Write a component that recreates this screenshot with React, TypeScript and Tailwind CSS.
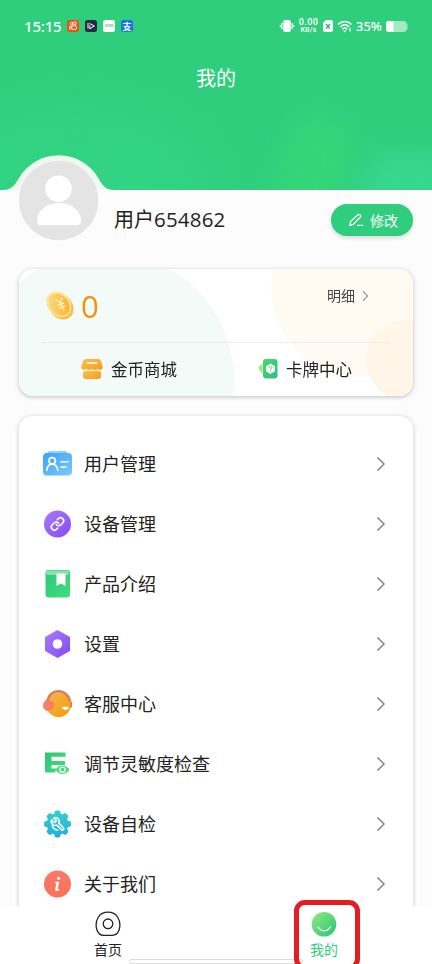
import React from 'react';

const Chevron: React.FC<{ className?: string }> = ({ className }) => (
  <svg viewBox="0 0 10 16" fill="none" className={className}>
    <path d="M1.5 1.5 8 8l-6.5 6.5" stroke="#858585" strokeWidth="1.5" />
  </svg>
);

// Menu icons, all drawn on a 30x30 grid
const UserCardIcon = () => (
  <svg viewBox="0 0 30 30" className="size-[30px]" fill="none">
    <defs>
      <linearGradient id="card" x1="0" y1="0" x2="1" y2="1">
        <stop stopColor="#3ba2f8" />
        <stop offset="1" stopColor="#7cc9fb" />
      </linearGradient>
    </defs>
    <rect x="4.500" y="2" width="20" height="8" rx="2" fill="#90d0fb" />
    <rect x="0" y="4" width="29" height="22.500" rx="4" fill="url(#card)" />
    <g stroke="#fff" strokeWidth="1.700" strokeLinecap="round">
      <circle cx="9.200" cy="11.800" r="3.200" />
      <path d="M3.700 21.300c.5-3.900 2.500-6.100 5.500-6.100s5 2.200 5.500 6.100" />
      <path d="M18 12.800h7M18 18h5" strokeWidth="1.500" />
    </g>
  </svg>
);

const LinkIcon = () => (
  <svg viewBox="0 0 30 30" className="size-[30px]" fill="none">
    <defs>
      <linearGradient id="violet" x1="0" y1="0" x2="1" y2="1">
        <stop stopColor="#a77cf8" />
        <stop offset="1" stopColor="#8649f5" />
      </linearGradient>
    </defs>
    <circle cx="14.500" cy="15" r="13.500" fill="url(#violet)" />
    <g transform="translate(7 7.500) scale(.62)" stroke="#fff" strokeWidth="2.600" strokeLinecap="round">
      <path d="M10 13a5 5 0 0 0 7.54.54l3-3a5 5 0 0 0-7.07-7.07l-1.72 1.71" />
      <path d="M14 11a5 5 0 0 0-7.54-.54l-3 3a5 5 0 0 0 7.07 7.07l1.71-1.71" />
    </g>
  </svg>
);

const BookIcon = () => (
  <svg viewBox="0 0 30 30" className="size-[30px]">
    <defs>
      <linearGradient id="book" x1="0" y1="0" x2="1" y2="1">
        <stop stopColor="#2fc57c" />
        <stop offset="1" stopColor="#3ee07b" />
      </linearGradient>
    </defs>
    <path d="M2.500 4a3 3 0 0 1 2-3H26l1 2v22.500a3 3 0 0 1-3 3H6A3.500 3.500 0 0 1 2.500 25z" fill="url(#book)" />
    <path d="M4 1.500h22L25.500 6H4c-1.300-1-1.300-3.500 0-4.500z" fill="#83e3ad" />
    <path d="M13.500 4.500h9V17L18 14.400 13.500 17z" fill="#fff" />
  </svg>
);

const HexIcon = () => (
  <svg viewBox="0 0 30 30" className="size-[30px]">
    <path
      d="M14.500 2 26 8.500v13L14.500 28 3 21.500v-13z"
      fill="url(#violet)"
      stroke="url(#violet)"
      strokeWidth="2"
      strokeLinejoin="round"
    />
    <circle cx="14.500" cy="15" r="4.800" fill="#fff" />
  </svg>
);

const ServiceIcon = () => (
  <svg viewBox="0 0 30 30" className="size-[30px]" fill="none">
    <defs>
      <linearGradient id="face" x1="0" y1="0" x2="1" y2="1">
        <stop stopColor="#f6b84a" />
        <stop offset="1" stopColor="#f39a10" />
      </linearGradient>
    </defs>
    <rect x="24.500" y="12" width="4.500" height="7" rx="2" fill="#dc7047" />
    <circle cx="15.500" cy="15.700" r="12.300" fill="url(#face)" />
    <path d="M4 12.500C6 5 10.500 2.200 15.500 2.200S25 5 27.200 12" stroke="#de7a51" strokeWidth="2.400" />
    <circle cx="5.500" cy="16.500" r="5.500" fill="#f97e62" />
    <path d="M18.800 17.800h7c0 4.200-6.500 4.200-7 0z" fill="#fff" />
  </svg>
);

const SensitivityIcon = () => (
  <svg viewBox="0 0 30 30" className="size-[30px]" fill="none">
    <defs>
      <linearGradient id="bars" x1="0" y1="0" x2="1" y2="1">
        <stop stopColor="#2ec47b" />
        <stop offset="1" stopColor="#45df78" />
      </linearGradient>
    </defs>
    <path d="M2 3.500h20.500v4.200h-14V12H22v4H8.500v3.500h5L12 23.500H2z" fill="url(#bars)" />
    <path d="M12.500 20.700c4-5.600 10-5.600 14 0-4 5.600-10 5.600-14 0z" fill="#44d97a" />
    <circle cx="19.500" cy="20.700" r="2.600" stroke="#fff" strokeWidth="1.400" />
  </svg>
);

const GearIcon = () => (
  <svg viewBox="0 0 30 30" className="size-[30px]" fill="none">
    <defs>
      <linearGradient id="cyan" x1="0" y1="0" x2="0" y2="30" gradientUnits="userSpaceOnUse">
        <stop stopColor="#38d2cc" />
        <stop offset="1" stopColor="#20acdf" />
      </linearGradient>
      <clipPath id="gear">
        <circle cx="14.500" cy="15" r="10.900" />
        {[0, 45, 90, 135].map((angle) => (
          <rect key={angle} x="11.500" y="1.500" width="6" height="27" rx="2" transform={`rotate(${angle} 14.500 15)`} />
        ))}
      </clipPath>
    </defs>
    <rect width="30" height="30" fill="url(#cyan)" clipPath="url(#gear)" />
    {/* wrench, mirrored so that the jaw opens to the top left */}
    <path
      transform="translate(22.800 7.200) scale(-.66 .66)"
      stroke="#fff"
      strokeWidth="2.300"
      strokeLinejoin="round"
      d="M14.7 6.3a1 1 0 0 0 0 1.4l1.6 1.6a1 1 0 0 0 1.4 0l3.77-3.77a6 6 0 0 1-7.94 7.94l-6.91 6.91a2.12 2.12 0 0 1-3-3l6.91-6.91a6 6 0 0 1 7.94-7.94l-3.76 3.76z"
    />
    <path d="M9.300 16.500a6 6 0 0 0 5.500 4.600" stroke="#fff" strokeWidth="1.400" strokeLinecap="round" />
  </svg>
);

const InfoIcon = () => (
  <svg viewBox="0 0 30 30" className="size-[30px]">
    <defs>
      <linearGradient id="coral" x1="0" y1="0" x2="0" y2="1">
        <stop stopColor="#fb7868" />
        <stop offset="1" stopColor="#fa7157" />
      </linearGradient>
    </defs>
    <circle cx="14.500" cy="15" r="13.500" fill="url(#coral)" />
    <circle cx="15.600" cy="9.300" r="1.600" fill="#fff" />
    <path d="M12.300 12.800h4l-1.700 7.200 1.700-.3-.3 1.600c-2 1.200-4.200 1-4-.8l1.400-6-1.300-.3z" fill="#fff" />
  </svg>
);

const menu = [
  { label: '用户管理', icon: <UserCardIcon /> },
  { label: '设备管理', icon: <LinkIcon /> },
  { label: '产品介绍', icon: <BookIcon /> },
  { label: '设置', icon: <HexIcon /> },
  { label: '客服中心', icon: <ServiceIcon /> },
  { label: '调节灵敏度检查', icon: <SensitivityIcon /> },
  { label: '设备自检', icon: <GearIcon /> },
  { label: '关于我们', icon: <InfoIcon /> },
];

const StatusBar = () => (
  <div className="flex h-[52px] items-center pl-6 pr-[24px] text-white">
    <span className="w-[38px] font-['Noto_Sans'] text-[15px] font-medium leading-none tracking-[-0.2px]">15:15</span>
    <div className="ml-[5px] flex gap-1.5">
      <span className="flex size-3 items-center justify-center rounded-[2.5px] bg-[#e65314]">
        <svg viewBox="0 0 12 12" className="size-3" fill="none" stroke="#fff" strokeWidth=".9">
          <circle cx="4.600" cy="3.600" r="1.300" />
          <circle cx="7.800" cy="3.400" r="1.500" />
          <rect x="4.800" y="5.800" width="4.600" height="3.600" rx="1" />
          <path d="M4.800 7 2.700 6v3.400l2.100-1" />
        </svg>
      </span>
      <span className="flex size-3 items-center justify-center rounded-[2.5px] bg-[#272c47]">
        <svg viewBox="0 0 12 12" className="size-3" fill="none" stroke="#fff" strokeWidth="1">
          <path d="M4.500 3.500 9.300 6 4.800 8.800V5.500M3 3v5.500" />
        </svg>
      </span>
      <span className="flex size-3 items-center justify-center rounded-[2.5px] bg-white font-['Inter'] text-[4px] font-bold leading-none text-[#6fbf98]">
        vivo
      </span>
      <span className="flex size-3 items-center justify-center rounded-[2.5px] bg-[#1673ee] text-[9px] font-bold leading-none">
        支
      </span>
    </div>
    <div className="ml-auto flex items-center">
      <svg viewBox="0 0 16 14" className="h-3.5 w-4" fill="#fff">
        <rect x="4.300" y="1" width="7.400" height="12" rx="1.800" />
        <path d="M2.200 4h1.300v6H2.200zM12.500 4h1.300v6h-1.300zM.7 6h1v2h-1zM14.300 6h1v2h-1z" />
      </svg>
      <div className="ml-[3px] flex w-[21px] flex-col items-center font-['Roboto'] font-medium">
        <span className="text-[9px] leading-[9px] tracking-[0.4px]">0.00</span>
        <span className="text-[7px] leading-[7px] tracking-[0.2px]">KB/s</span>
      </div>
      <svg viewBox="0 0 10 12" className="ml-[4px] h-3 w-2.5">
        <path d="M3 0h5a2 2 0 0 1 2 2v8a2 2 0 0 1-2 2H2a2 2 0 0 1-2-2V3z" fill="#fff" />
        <path d="m3 4 4 4.500M7 4 3 8.500" stroke="#2fae6d" strokeWidth="1.300" />
      </svg>
      <svg viewBox="0 0 16 13" className="ml-[4px] h-[13px] w-4" fill="none" stroke="#fff" strokeWidth="1.500">
        <path d="M1 4.500c4-4 9.500-4 13.500 0M3.300 7c2.700-2.700 6.200-2.700 9 0M5.300 9.200c1.500-1.500 3.500-1.500 5 0" />
        <path d="m6 10.500 1.800 2 1.700-2z" fill="#fff" stroke="none" />
        <path d="M13 8v3.500" strokeWidth="1.200" />
      </svg>
      <span className="ml-[3px] w-[27px] font-['Noto_Sans'] text-[13px] font-medium leading-none">35%</span>
      <svg viewBox="0 0 22 11" className="ml-[3px] h-[11px] w-[22px]">
        <path d="M3 0h15.500c1.500 0 2 2.500 3 3v5c-1 .5-1.500 3-3 3H3a3 3 0 0 1-3-3V3a3 3 0 0 1 3-3z" fill="#a4e9c4" />
        <path d="M3 0h4.500v11H3a3 3 0 0 1-3-3V3a3 3 0 0 1 3-3z" fill="#fff" />
      </svg>
    </div>
  </div>
);

const Header = () => (
  <header className="relative h-[190px] shrink-0 overflow-hidden bg-[#2fce7d]">
    {/* soft glow at the bottom of the banner */}
    <div className="absolute -left-16 top-[115px] h-[190px] w-[280px] rounded-full bg-[#35d98c]/50 blur-2xl" />
    <div className="absolute left-[278px] top-[118px] h-[110px] w-[68px] rotate-[20deg] rounded-full bg-[#37d876]/65 blur-md" />
    <div className="absolute left-[360px] top-[152px] h-[70px] w-[95px] rounded-full bg-[#3ad891]/80 blur-md" />
    <div className="relative">
      <StatusBar />
      <h1 className="mt-[11px] text-center text-[20px] font-normal leading-[30px] text-white">我的</h1>
    </div>
  </header>
);

const Profile = () => (
  <section className="relative flex h-[79px] shrink-0 items-start">
    <svg viewBox="0 0 118 90" className="absolute left-0 top-[-36px] h-[90px] w-[118px]">
      <path d="M0 36H3C13 36 16 29 19.300 23.500a46 46 0 0 1 78.700 0c4 7 7 12.500 16 12.500h4v2H0z" fill="#f0f9ef" />
      <path d="M0 36h118v54H0z" fill="#fcfcfc" />
      <circle cx="58.700" cy="46.500" r="39.700" fill="#e4e4e4" />
      <circle cx="58.500" cy="34.700" r="13.300" fill="#fff" />
      <path d="M37 67c0-9 8-18 22-18s22 9 22 18c0 3-1 4-4 4H41c-3 0-4-1-4-4z" fill="#fff" />
    </svg>
    <div className="relative ml-[114px] mt-[14px] text-[20px] leading-[30px] text-[#222]">
      用户<span className="font-['Open_Sans'] text-[20.5px] tracking-[0.2px]">654862</span>
    </div>
    <button className="ml-auto mr-[19px] mt-[14px] flex h-8 w-[82px] items-center rounded-full bg-[#2fce7d] pl-[17px] text-[14px] text-white shadow-[0_2px_4px_rgba(0,0,0,0.15)]">
      <svg viewBox="0 0 16 14" className="h-3.5 w-4" fill="none" stroke="#fff" strokeWidth="1.300" strokeLinecap="round" strokeLinejoin="round">
        <path d="m1.800 12.300.7-3.800L9.600 1.900c1.700-1.400 4 .8 2.600 2.400L5.300 11.300z" />
        <path d="M9.500 12.300h5" />
      </svg>
      <span className="ml-[6px]">修改</span>
    </button>
  </section>
);

const CoinCard = () => (
  <section className="relative mx-[19px] h-[127px] shrink-0 overflow-hidden rounded-[14px] bg-white">
    <div className="absolute left-[-44px] top-[-18px] size-[259px] rounded-full bg-[#f2fbf7]" />
    <div className="absolute left-[252px] top-[-72px] size-[180px] rounded-full bg-[#fffaf2]" />
    <div className="absolute left-[347px] top-[51px] size-[80px] rounded-full bg-[#fff6e8]" />
    <div className="relative flex h-[73px] items-start pl-[26px] pr-[44px]">
      <svg viewBox="0 0 30 32" className="mt-[20px] h-8 w-[30px]">
        <defs>
          <linearGradient id="coin" x1="0" y1="0" x2="1" y2="1">
            <stop stopColor="#ffe08a" />
            <stop offset="1" stopColor="#f9ad20" />
          </linearGradient>
        </defs>
        <ellipse cx="15.800" cy="17.300" rx="11.500" ry="14.300" transform="rotate(-40 15.800 17.300)" fill="#f9bf4c" />
        <ellipse cx="13.800" cy="15.300" rx="11.300" ry="14" transform="rotate(-40 13.800 15.300)" fill="#ffe49c" />
        <ellipse cx="14.200" cy="15.700" rx="9.300" ry="12" transform="rotate(-40 14.200 15.700)" fill="url(#coin)" />
        <path d="m10.500 10 5 4 1.500-5.500M15.500 14l3.500 7.500M12.500 16.500l6.500-2.500M13.800 19.300l6.700-2.600" stroke="#fff3c4" strokeWidth="1.400" fill="none" />
      </svg>
      <span className="ml-[6px] mt-[19px] font-['Open_Sans'] text-[31px] leading-[36px] text-[#f0930e]">0</span>
      <div className="ml-auto mt-[16px] flex items-center text-[14px] leading-[20px] text-[#444]">
        明细
        <Chevron className="ml-[7px] mt-[2px] h-3 w-[7px]" />
      </div>
    </div>
    <div className="relative mx-[23px] h-px bg-[#ededeb]" />
    <div className="relative flex h-[53px] items-center text-[16.5px] text-[#222]">
      <svg viewBox="0 0 22 20" className="-mt-px ml-[62px] h-5 w-[22px]">
        <defs>
          <linearGradient id="shop" x1="0" y1="0" x2="1" y2="1">
            <stop stopColor="#f9c34c" />
            <stop offset="1" stopColor="#fb981c" />
          </linearGradient>
        </defs>
        <path d="M5 0h12c2 0 2.600 1 3 2.500l1.800 5.500c0 3-3.800 3.800-5.400 1.600-1.500 2.200-4 2.200-5.400 0-1.500 2.200-4 2.200-5.400 0C4 11.800.2 11 .2 8L2 2.500C2.400 1 3 0 5 0z" fill="url(#shop)" />
        <path d="M2 12.500c1.500.2 2.700-.3 3.800-1.200 1.600 1.300 3.600 1.300 5.200 0 1.600 1.300 3.600 1.300 5.200 0 1.100.9 2.300 1.400 3.800 1.200V17a3 3 0 0 1-3 3H5a3 3 0 0 1-3-3z" fill="url(#shop)" />
        <path d="M6.500 4h9" stroke="#fff" strokeWidth="1.600" strokeLinecap="round" />
      </svg>
      <span className="ml-[8px] w-[67px]">金币商城</span>
      <svg viewBox="0 0 20 20" className="-mt-px ml-[80px] size-5">
        <defs>
          <linearGradient id="deck" x1="0" y1="0" x2="1" y2="1">
            <stop stopColor="#4bd873" />
            <stop offset="1" stopColor="#2bc07f" />
          </linearGradient>
        </defs>
        <path d="M4.500 4v11L1 10.500C.5 9.500.5 9 1 8z" fill="#9ee985" />
        <rect x="5" y="0" width="14.500" height="19.500" rx="3" fill="url(#deck)" />
        <path d="m12.500 5.200 3.700 2.200v4.700l-3.700 2.200-3.700-2.200V7.400z" fill="#fff" stroke="#fff" strokeWidth="1.200" strokeLinejoin="round" />
        <path d="M11.200 8.800c0-1.700 2.800-1.700 2.600 0-.2 1-1.300.9-1.300 1.900M12.500 11.700v1" stroke="#3fcb78" fill="none" />
      </svg>
      <span className="ml-[8px]">卡牌中心</span>
    </div>
  </section>
);

const BottomNav = () => (
  <nav className="relative flex h-[58px] shrink-0 overflow-hidden bg-white text-[14px] leading-[18px]">
    <div className="flex w-1/2 flex-col items-center pt-[5px]">
      <svg viewBox="0 0 26 26" className="size-[26px]" fill="none" stroke="#222" strokeWidth="1.300">
        <path d="M13 1.200c4 0 7.500 1.600 9.600 4.800 2.200 3.600 2.800 8.500 1.600 12.500-1 3.500-3.400 5.800-7 5.800H8.800c-3.600 0-6-2.300-7-5.800C.6 14.500 1.200 9.600 3.400 6 5.500 2.800 9 1.200 13 1.200z" />
        <circle cx="13" cy="12.800" r="4.800" />
      </svg>
      <span className="mt-[3px] text-[#222]">首页</span>
    </div>
    <div className="flex w-1/2 flex-col items-center pt-[5px]">
      <svg viewBox="0 0 26 26" className="size-[26px]" fill="none">
        <defs>
          <linearGradient id="smile" x1="0" y1="0" x2="1" y2="1">
            <stop offset=".1" stopColor="#8ce57c" />
            <stop offset=".9" stopColor="#2fc87d" />
          </linearGradient>
        </defs>
        <circle cx="13" cy="13.300" r="12.300" fill="url(#smile)" />
        <path d="M7 16c3 5 9.500 5 12.500 0" stroke="#fff" strokeWidth="1.400" strokeLinecap="round" />
      </svg>
      <span className="mt-[3px] text-[#2fce7d]">我的</span>
    </div>
    <div className="absolute bottom-0 left-[129px] h-[5px] w-[174px] rounded-[2px] border border-[#dedede] bg-white" />
  </nav>
);

const App: React.FC = () => {
  return (
    <div className="flex h-[964px] w-[432px] flex-col overflow-hidden bg-[#fcfcfc] font-['Noto_Sans_CJK_SC',sans-serif]">
      <Header />
      <Profile />
      <div className="shrink-0 drop-shadow-[0_1px_2px_rgba(0,0,0,0.25)]">
        <CoinCard />
      </div>
      <main className="mt-[12px] h-[498px] shrink-0 overflow-hidden px-[19px] pt-[8px]">
        <ul className="h-[520px] rounded-[14px] bg-white pt-[18px] shadow-[0_1px_5px_rgba(0,0,0,0.22)]">
          {menu.map(({ label, icon }) => (
            <li key={label} className="flex h-[60px] items-center pl-[24px] pr-[27px] text-[18px] text-[#222]">
              {icon}
              <span className="-mt-px ml-[11px]">{label}</span>
              <Chevron className="ml-auto h-4 w-2.5" />
            </li>
          ))}
        </ul>
      </main>
      <BottomNav />
      {/* highlight around the active tab */}
      <div className="absolute left-[294px] top-[900px] h-[64px] w-[66px] overflow-hidden">
        <div className="h-[70px] rounded-[11px] border-[5px] border-[#e51d23]" />
      </div>
    </div>
  );
};

export default App;
